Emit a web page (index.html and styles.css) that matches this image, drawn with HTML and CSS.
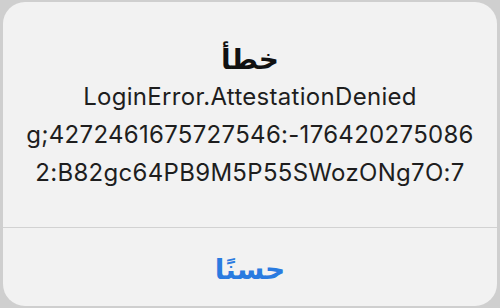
FILE: index.html
```html
<!DOCTYPE html>
<html lang="ar">
<head>
  <meta charset="UTF-8">
  <title>خطأ</title>
  <link rel="stylesheet" href="styles.css">
</head>
<body>
  <div class="alert">
    <div class="alert-body">
      <h1 class="alert-title">خطأ</h1>
      <p class="alert-message" dir="ltr">LoginError.AttestationDenied<br>g;4272461675727546:-176420275086<br>2:B82gc64PB9M5P55SWozONg7O:7</p>
    </div>
    <button class="alert-btn">حسنًا</button>
  </div>
</body>
</html>
```

FILE: styles.css
```css
body {
  margin: 0;
  background: #cfcfcf;
  font-family: Inter, "Open Sans", sans-serif;
  width: 500px;
  height: 308px;
  overflow: hidden;
}
.alert {
  margin: 2px 3px;
  height: 304px;
  background: #f2f2f2;
  border-radius: 22px;
  display: flex;
  flex-direction: column;
}
.alert-body {
  padding: 40px 0 0;
  height: 185px;
  border-bottom: 1px solid #d2d2d2;
  text-align: center;
}
.alert-title {
  margin: 0;
  font-family: "DejaVu Sans", sans-serif;
  font-size: 28px;
  font-weight: bold;
  line-height: 36px;
  color: #111;
}
.alert-message {
  margin: 0;
  font-size: 24px;
  letter-spacing: 0.3px;
  line-height: 38px;
  color: #1e1e1e;
}
.alert-btn {
  flex: 1;
  border: none;
  background: none;
  font-family: "DejaVu Sans", sans-serif;
  font-size: 28px;
  font-weight: bold;
  color: #2a7be0;
  padding: 4px 0 0;
}
```
